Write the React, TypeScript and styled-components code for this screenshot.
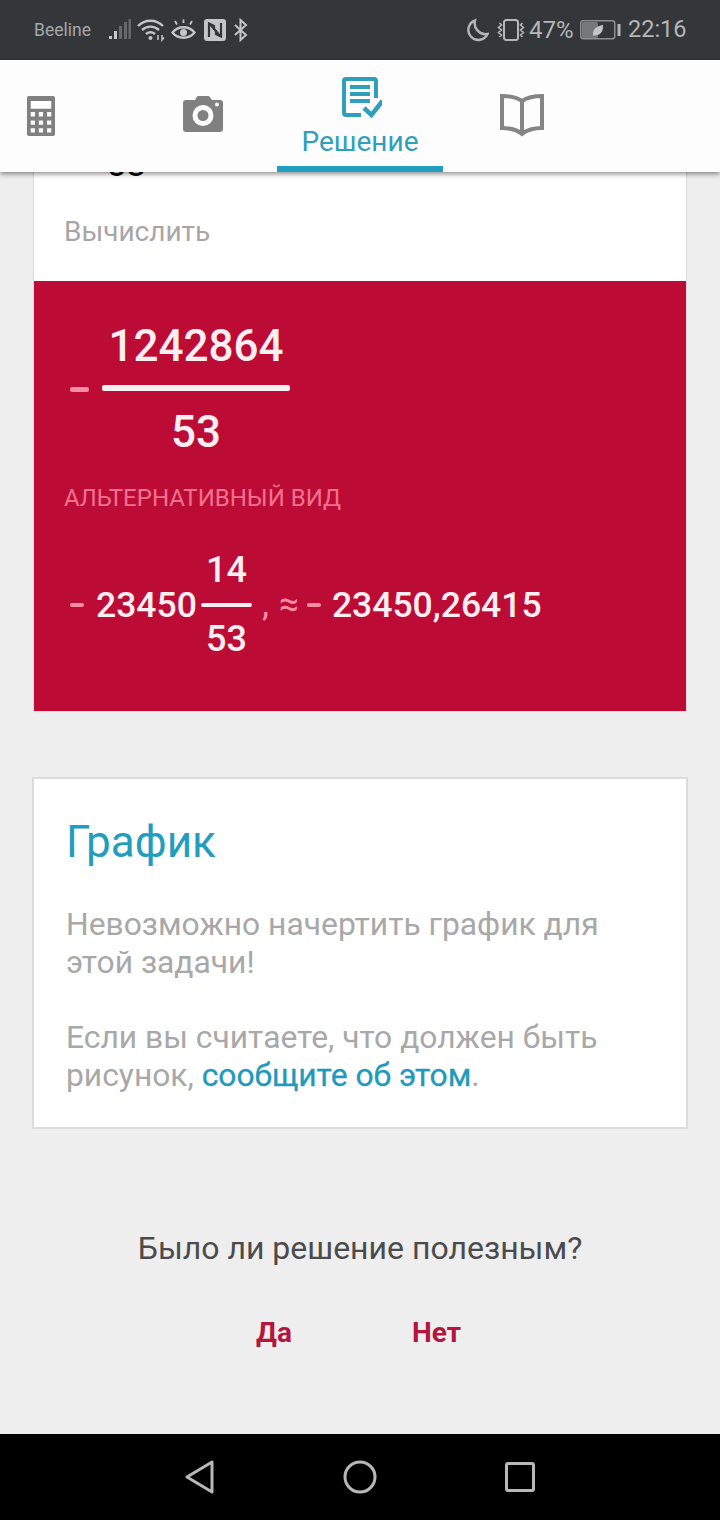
import React from "react";
import styled, { createGlobalStyle } from "styled-components";

const Global = createGlobalStyle`
  html, body { margin: 0; padding: 0; width: 720px; height: 1520px; overflow: hidden; background: #eeeeee; }
  body { font-family: Roboto, "Noto Sans", sans-serif; }
  * { box-sizing: border-box; }
`;

const Screen = styled.div`
  width: 720px; height: 1520px; display: flex; flex-direction: column; background: #eeeeee;
`;
const StatusBar = styled.div`
  height: 60px; flex: none; background: #34373a; color: #b4b5b6; display: flex; align-items: center;
  justify-content: space-between; padding: 0 34px;
`;
const StatusGroup = styled.div`display: flex; align-items: center;`;
const Carrier = styled.span`font-size: 17.5px; color: #a5a7a8; width: 74px;`;
const StatusText = styled.span<{ $size: number; $w: number }>`font-size: ${p => p.$size}px; width: ${p => p.$w}px; white-space: nowrap; color: #b5b6b7; line-height: 1;`;

const TabBar = styled.div`
  height: 112px; flex: none; background: #fdfdfd; display: grid;
  grid-template-columns: 81px 196px 166px 158px 1fr; box-shadow: 0 2px 5px rgba(0,0,0,.45); position: relative; z-index: 2;
`;
const Tab = styled.div<{ $active?: boolean; $inset?: number }>`
  display: flex; flex-direction: column; align-items: center; justify-content: flex-start;
  padding-left: ${p => p.$inset ?? 0}px;
  color: #2aa0bf; border-bottom: ${p => (p.$active ? "6px solid #229fc0" : "0")};
`;
const TabLabel = styled.span`font-size: 28px; line-height: 30px; margin-top: 6px; color: #2f9fbc;`;

const Main = styled.main`flex: 1; overflow: hidden; padding: 0 33px; display: flex; flex-direction: column;`;
const ProblemCard = styled.section`background: #fff; border: solid #d8d8d8; border-width: 0 1px; height: 109px; padding: 0 30px;`;
const CutNumber = styled.div`height: 9px; overflow: hidden; font-size: 36px; line-height: 37px; font-weight: 400; color: #000; margin-left: 42px;`;
const CutInner = styled.div`margin-top: -26px;`;
const Compute = styled.div`font-size: 28px; line-height: 32px; color: #a6a6a6; margin-top: 35px;`;

const Result = styled.section`
  background: #bc0c36; height: 431px; padding: 44px 31px 0 36px; color: #fdeef2; border: solid #e6d9dc; border-width: 0 1px 1px;
`;
const MathRow = styled.div`display: flex; align-items: center;`;
const Fraction = styled.div`display: flex; flex-direction: column; align-items: center; margin-left: 12px;`;
const Num = styled.div<{ $size: number; $h: number }>`font-size: ${p => p.$size}px; line-height: ${p => p.$h}px; font-weight: 500;`;
const Bar = styled.div<{ $w: number; $h: number }>`width: ${p => p.$w}px; height: ${p => p.$h}px; background: #fdeef2; border-radius: 2px;`;
const Sign = styled.span<{ $w: number }>`width: ${p => p.$w}px; flex: none;`;
const SignBar = styled(Bar)`background: #f98ca5;`;
const FractionRule = styled(Bar)<{ $above: number; $below: number }>`margin: ${p => p.$above}px 0 ${p => p.$below}px;`;
const AltLabel = styled.div`font-size: 24px; line-height: 28px; color: #f1718f; margin: 31px 0 0 -6px;`;
const AltRow = styled.div`display: flex; align-items: center; margin-top: 40px; font-size: 35.5px; font-weight: 500;`;
const SmallFraction = styled.div`display: flex; flex-direction: column; align-items: center; margin: 0 10px 0 4px; width: 51px;`;
const Punct = styled.span<{ $w: number }>`color: #f98ca5; width: ${p => p.$w}px; line-height: 1; font-weight: 400;`;

const GraphCard = styled.section`
  background: #fff; border: 2px solid #dcdcdc; height: 352px; margin: 65px -1px 0; padding: 37px 32px 0;
`;
const GraphTitle = styled.h2`margin: 0; font-size: 44px; line-height: 52px; font-weight: 400; color: #239dbd;`;
const Para = styled.p`margin: 0; font-size: 31.8px; line-height: 38px; color: #a8a8a8; width: 590px; & + & { margin-top: 37px; }`;
const ParaGroup = styled.div`margin-top: 37px;`;
const ReportLink = styled.a`color: #1f9abb; font-weight: 400; -webkit-text-stroke: 0.3px #1f9abb;`;

const Feedback = styled.div`display: flex; flex-direction: column; align-items: center; margin-top: 99px;`;
const Question = styled.div`font-size: 32px; line-height: 40px; color: #4b4b4d;`;
const Answers = styled.div`display: flex; gap: 120px; margin-top: 49px; padding-right: 3px;`;
const Answer = styled.span`font-size: 28px; line-height: 32px; font-weight: 700; color: #b5163c;`;

const NavBar = styled.div`
  height: 86px; flex: none; background: #000; display: grid; grid-template-columns: 160px 160px 160px;
  justify-content: center; align-items: center; justify-items: center;
`;

const S = styled.svg<{ $after?: number }>`display: block; flex: none; margin-right: ${p => p.$after ?? 0}px;`;
const TabIcon = styled(S)<{ $top: number }>`margin-top: ${p => p.$top}px;`;

export default function App() {
  return (
    <Screen>
      <Global />
      <StatusBar>
        <StatusGroup>
          <Carrier>Beeline</Carrier>
          <S $after={5} width="24" height="24" viewBox="0 0 24 24">
            <rect x="1" y="18" width="3" height="3" fill="#c8c8c8" />
            <rect x="6" y="13" width="3" height="8" fill="#c8c8c8" />
            <rect x="11" y="8" width="3" height="13" fill="#66696b" />
            <rect x="16" y="4" width="3" height="17" fill="#66696b" />
            <rect x="20.500" y="1" width="2.500" height="20" fill="#66696b" />
          </S>
          <S $after={6} width="28" height="24" viewBox="0 0 28 24" fill="none" stroke="#c4c5c6" strokeWidth="2.400">
            <path d="M1 8c7-7 18-7 25 0M5 12c5-4.500 12-4.500 17 0M9 16c2.700-2 6.300-2 9 0" />
            <circle cx="13.500" cy="20" r="2" fill="#c4c5c6" stroke="none" />
            <path d="M21 17v5M25 17v5l2-2.500" strokeWidth="1.500" />
          </S>
          <S $after={8} width="25" height="24" viewBox="0 0 25 24" fill="none" stroke="#c4c5c6" strokeWidth="2.400">
            <path d="M1.500 14.500C7 7.500 18 7.500 23.500 14.500 18 21.500 7 21.500 1.500 14.500Z" />
            <circle cx="12.500" cy="14.500" r="3.500" fill="#c4c5c6" stroke="none" />
            <path d="M12.500 5V1.500M6 6.500L4 3M19 6.500L21 3" strokeWidth="1.800" />
          </S>
          <S $after={7} width="22" height="24" viewBox="0 0 22 24">
            <rect y="1" width="22" height="22" rx="3" fill="#c4c5c6" />
            <path d="M5 19V5.500L10 8v4M17 5v13.500L12 16v-4M5.500 5.500L16.500 18.500" fill="none" stroke="#34373a" strokeWidth="2.200" />
          </S>
          <S width="16" height="24" viewBox="0 0 16 24" fill="none" stroke="#c4c5c6" strokeWidth="2">
            <path d="M2 7l11 10-5.500 5V2L13 7 2 17" />
          </S>
        </StatusGroup>
        <StatusGroup>
          <S $after={8} width="23" height="24" viewBox="0 0 23 24" fill="none" stroke="#b5b6b7" strokeWidth="2.400">
            <path d="M9 2.500a10 10 0 1 0 12.500 13.500A11 11 0 0 1 9 2.500Z" />
          </S>
          <S $after={4} width="28" height="24" viewBox="0 0 28 24" fill="none" stroke="#b5b6b7" strokeWidth="2">
            <rect x="7" y="2" width="14" height="20" rx="2.500" />
            <path d="M2.500 5l2 2-3 2.500 3 2.500-3 2.500 3 2.500-2 2M25.500 5l-2 2 3 2.500-3 2.500 3 2.500-3 2.500 2 2" strokeWidth="1.600" />
          </S>
          <StatusText $size={24} $w={43}>47%</StatusText>
          <S $after={7} width="41" height="20" viewBox="0 0 41 20" style={{ marginLeft: 8 }}>
            <rect x=".750" y=".750" width="34" height="18" rx="2.500" fill="none" stroke="#8c8e90" strokeWidth="1.500" />
            <rect x="2" y="2" width="16" height="16" rx="1.500" fill="#76787a" />
            <path d="M13 15.500c-.500-6 3-9.500 10-10.500 .500 7-3 11-10 10.500Z" fill="#c4c5c6" />
            <rect x="37.500" y="4" width="3" height="12" fill="#b5b6b7" />
          </S>
          <StatusText $size={23.500} $w={58}>22:16</StatusText>
        </StatusGroup>
      </StatusBar>

      <TabBar>
        <Tab>
          <TabIcon $top={36} width="28" height="40" viewBox="0 0 30 41" preserveAspectRatio="none">
            <path fillRule="evenodd" fill="#808080" d="M2 0h26a2 2 0 0 1 2 2v37a2 2 0 0 1-2 2H2a2 2 0 0 1-2-2V2a2 2 0 0 1 2-2ZM4 5v8h22V5ZM4 16.500v4.500h4.500v-4.500ZM12.700 16.500v4.500h4.500v-4.500ZM21.500 16.500v4.500H26v-4.500ZM4 25v4.500h4.500V25ZM12.700 25v4.500h4.500V25ZM21.500 25v4.500H26V25ZM4 33v4.500h4.500V33ZM12.700 33v4.500h4.500V33ZM21.500 33v4.500H26V33Z" />
          </TabIcon>
        </Tab>
        <Tab $inset={48}>
          <TabIcon $top={36} width="40" height="36" viewBox="0 0 40 36">
            <path fillRule="evenodd" fill="#808080" d="M12 4l2-3.500Q14.500 0 15.500 0h9.500q1 0 1.500.500L29 4h8a3 3 0 0 1 3 3v26a3 3 0 0 1-3 3H3a3 3 0 0 1-3-3V7a3 3 0 0 1 3-3ZM20 9a10.500 10.500 0 1 0 0 21 10.500 10.500 0 0 0 0-21ZM20 14a5.500 5.500 0 1 1 0 11 5.500 5.500 0 0 1 0-11ZM34 6.500a2 2 0 1 0 0 4 2 2 0 0 0 0-4Z" />
          </TabIcon>
        </Tab>
        <Tab $active>
          <TabIcon $top={17} width="44" height="44" viewBox="-2 0 44 44" fill="none" stroke="#2f9fbc">
            <path d="M36 21V4a2 2 0 0 0-2-2H6a2 2 0 0 0-2 2v32a2 2 0 0 0 2 2h15" strokeWidth="4" />
            <path d="M10 10h20M10 17h20M10 24h20" strokeWidth="3.800" />
            <path d="M24 31l7.500 7 11-14" strokeWidth="4.500" />
          </TabIcon>
          <TabLabel>Решение</TabLabel>
        </Tab>
        <Tab>
          <TabIcon $top={33} width="44" height="44" viewBox="0 0 44 44" fill="none" stroke="#858585" strokeWidth="4">
            <path d="M22 8C16 4 9 3 2 3v32c7 0 14 1 20 6 6-5 13-6 20-6V3c-7 0-14 1-20 5ZM22 8v33" />
          </TabIcon>
        </Tab>
        <Tab />
      </TabBar>

      <Main>
        <ProblemCard>
          <CutNumber><CutInner>53</CutInner></CutNumber>
          <Compute>Вычислить</Compute>
        </ProblemCard>
        <Result>
          <MathRow>
            <Sign $w={20}><SignBar $w={19} $h={5} /></Sign>
            <Fraction>
              <Num $size={44} $h={42}>1242864</Num>
              <FractionRule $w={188} $h={6} $above={18} $below={20} />
              <Num $size={44} $h={42}>53</Num>
            </Fraction>
          </MathRow>
          <AltLabel>АЛЬТЕРНАТИВНЫЙ ВИД</AltLabel>
          <AltRow>
            <Sign $w={26}><SignBar $w={14} $h={4} /></Sign>
            <span>23450</span>
            <SmallFraction>
              <Num $size={36} $h={36}>14</Num>
              <FractionRule $w={51} $h={4} $above={15} $below={14} />
              <Num $size={36} $h={36}>53</Num>
            </SmallFraction>
            <Punct $w={17}>,</Punct>
            <Punct $w={28}>≈</Punct>
            <Sign $w={25}><SignBar $w={14} $h={4} /></Sign>
            <span>23450,26415</span>
          </AltRow>
        </Result>
        <GraphCard>
          <GraphTitle>График</GraphTitle>
          <ParaGroup>
            <Para>Невозможно начертить график для этой задачи!</Para>
            <Para>Если вы считаете, что должен быть рисунок, <ReportLink>сообщите об этом</ReportLink>.</Para>
          </ParaGroup>
        </GraphCard>
        <Feedback>
          <Question>Было ли решение полезным?</Question>
          <Answers>
            <Answer>Да</Answer>
            <Answer>Нет</Answer>
          </Answers>
        </Feedback>
      </Main>

      <NavBar>
        <S width="30" height="34" viewBox="0 0 30 34" fill="none" stroke="#b8b8b8" strokeWidth="3" strokeLinejoin="round">
          <path d="M27 2v30L2 17Z" />
        </S>
        <S width="34" height="34" viewBox="0 0 34 34" fill="none" stroke="#b8b8b8" strokeWidth="3">
          <circle cx="17" cy="17" r="15" />
        </S>
        <S width="30" height="30" viewBox="0 0 30 30" fill="none" stroke="#b8b8b8" strokeWidth="3" strokeLinejoin="round">
          <rect x="1.500" y="1.500" width="27" height="27" rx="1.500" />
        </S>
      </NavBar>
    </Screen>
  );
}
